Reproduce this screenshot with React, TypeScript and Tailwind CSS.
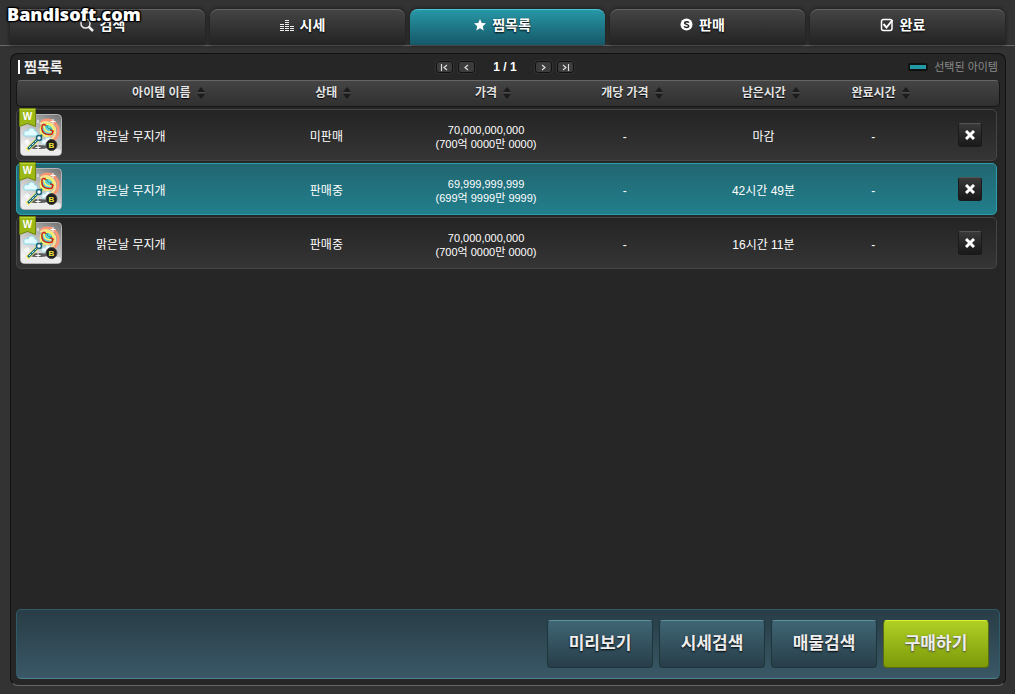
import React, { useState } from 'react';

const FONT = "font-['Liberation_Sans','Noto_Sans_CJK_KR',sans-serif]";
const COLS =
  'grid grid-cols-[minmax(0,230fr)_minmax(0,160fr)_minmax(0,160fr)_minmax(0,118fr)_minmax(0,160fr)_minmax(0,60fr)_minmax(0,93fr)] items-center';

const SearchIcon = () => (
  <svg width="14" height="14" viewBox="0 0 14 14" fill="none" stroke="#eee">
    <circle cx="5.5" cy="5.5" r="4.5" strokeWidth="1.5" />
    <path d="M8.5 8.5l4.5 4.5" strokeWidth="2.5" />
  </svg>
);

const ChartIcon = () => (
  <svg width="14" height="12" viewBox="0 0 14 12" fill="#eee" shapeRendering="crispEdges">
    <path d="M0 5h4v1H0zM0 7h4v1H0zM0 9h4v1H0zM0 11h4v1H0zM5 1h4v1H5zM5 3h4v1H5zM5 5h4v1H5zM5 7h4v1H5zM5 9h4v1H5zM5 11h4v1H5zM10 7h4v1h-4zM10 9h4v1h-4zM10 11h4v1h-4z" />
  </svg>
);

const StarIcon = () => (
  <svg width="12" height="12" viewBox="0 0 12 12" fill="#fff">
    <path d="M6 0l1.7 3.9 4.3.4-3.2 2.9.9 4.3L6 9.3l-3.7 2.2.9-4.3L0 4.3l4.3-.4z" />
  </svg>
);

const CoinIcon = () => (
  <svg width="13" height="13" viewBox="0 0 13 13">
    <circle cx="6.5" cy="6.5" r="6" fill="#fff" />
    <path d="M8.8 4.6C8.2 3.3 4.6 3.2 4.6 5c0 1.7 4.1 1 4.1 3 0 1.9-3.8 1.8-4.5.2" fill="none" stroke="#222" strokeWidth="1.5" />
  </svg>
);

const CheckIcon = () => (
  <svg width="14" height="14" viewBox="0 0 14 14" fill="none" stroke="#fff">
    <rect x="1.5" y="1.5" width="10.5" height="11" rx="2" strokeWidth="1.5" />
    <path d="M3.5 6l3 3.5L12.5 2" strokeWidth="2" />
  </svg>
);

const SortIcon = () => (
  <svg width="10" height="12" viewBox="0 0 10 12">
    <path d="M5 0l4 5H1z" fill="#1c1c1c" />
    <path d="M1 5.5h8" stroke="#4c4c4c" />
    <path d="M1 7h8l-4 5z" fill="#1c1c1c" />
  </svg>
);

const ItemIcon = () => (
  <svg width="42" height="42" viewBox="0 0 42 42" className="block">
    <defs>
      <linearGradient id="tile" x1="1" y1="0" x2="0.4" y2="1">
        <stop offset="0" stopColor="#6f6f6f" />
        <stop offset="0.45" stopColor="#b4b4b4" />
        <stop offset="1" stopColor="#f2f2f2" />
      </linearGradient>
    </defs>
    <rect x="0.5" y="0.5" width="41" height="41" rx="4" fill="url(#tile)" stroke="#b5b5b5" />
    <ellipse cx="18" cy="33" rx="10" ry="2" fill="#333" opacity="0.75" />
    <rect x="1" y="35" width="40" height="6" rx="3" fill="#ececec" />
    {/* rainbow ring */}
    <path d="M21 8c9-6 19 2 17 12-1 3-3 6-6 7" fill="none" stroke="#ff9473" strokeWidth="2.5" />
    <path d="M20 10c8-5 17 1 15 10-1 3-3 5-5 6" fill="none" stroke="#ffe08f" strokeWidth="2" />
    {/* clouds */}
    <path d="M4 21c-1-4 2-5 4-4 1-4 6-4 7 0 3 0 3 5 1 5H6c-1 0-2 0-2-1z" fill="#e4fbff" stroke="#86dbe9" />
    <path d="M22 30c-1-4 1-5 3-4 1-4 6-3 6 0 2 0 2 4 1 4z" fill="#f4fdff" stroke="#a3e2ee" />
    {/* candy head */}
    <ellipse cx="27" cy="16" rx="7.5" ry="7" fill="#f8f06a" />
    <ellipse cx="27" cy="16" rx="5.5" ry="5" fill="#5fd0d8" />
    <path d="M22 12c-1 6 3 10 10 8l1-3" fill="none" stroke="#d02414" strokeWidth="1.5" />
    <path d="M22 12c1-2 3-2 4 0M30 16c2 0 3 0 3 2" fill="none" stroke="#d02414" strokeWidth="1.5" />
    <path d="M24 12c0 4 2 6 7 6" fill="none" stroke="#fff36b" strokeWidth="1.5" />
    <path d="M27 11c0 3 1 4 5 4" fill="none" stroke="#1c8f86" />
    {/* wand */}
    <path d="M7 36L22 21" stroke="#fff264" strokeWidth="4" />
    <path d="M8 35L22 21" stroke="#12617c" strokeWidth="2.5" />
    <path d="M9 34L20 23" stroke="#c8f8ff" strokeDasharray="3 1" />
    <circle cx="19" cy="24" r="2.5" fill="#fff" stroke="#17657d" strokeWidth="1.5" />
    {/* sparkles */}
    <path d="M33 5v5M30.5 7.500h5M18 31v5M15.5 33.500h5M7 25v6M4 28h6M5 26l4 4M9 26l-4 4M18 6v3" stroke="#fff" />
    <circle cx="31.5" cy="31" r="5.5" fill="#1e1e1e" stroke="#4a4a4a" />
    <text x="31.5" y="34" textAnchor="middle" fill="#f0e43c" className="text-[8px] font-bold">
      B
    </text>
  </svg>
);

const Badge = () => (
  <svg width="17" height="19" viewBox="0 0 17 19" className="absolute -left-px -top-1.5">
    <path d="M0.5 0.500h16v18l-8-3-8 3z" fill="#9bb814" stroke="#6f850b" />
    <path d="M1 1.500h15" stroke="#bad52f" />
    <text x="8.5" y="12" textAnchor="middle" fill="#fff" className="text-[10px] font-bold">
      W
    </text>
  </svg>
);

const tabs = [
  { label: '검색', icon: <SearchIcon /> },
  { label: '시세', icon: <ChartIcon /> },
  { label: '찜목록', icon: <StarIcon /> },
  { label: '판매', icon: <CoinIcon /> },
  { label: '완료', icon: <CheckIcon /> },
];

const headers = ['아이템 이름', '상태', '가격', '개당 가격', '남은시간', '완료시간'];

const items = [
  { name: '맑은날 무지개', status: '미판매', price: '70,000,000,000', read: '(700억 0000만 0000)', left: '마감' },
  { name: '맑은날 무지개', status: '판매중', price: '69,999,999,999', read: '(699억 9999만 9999)', left: '42시간 49분' },
  { name: '맑은날 무지개', status: '판매중', price: '70,000,000,000', read: '(700억 0000만 0000)', left: '16시간 11분' },
];

const PageButton: React.FC<{ label: string; d: string }> = ({ label, d }) => (
  <button
    aria-label={label}
    className="flex h-3 w-[17px] items-center justify-center rounded-[3px] border border-[#111] bg-[#3c3c3c] shadow-[0_0_0_1px_#303030]"
  >
    <svg width="9" height="7" viewBox="0 0 9 7" fill="none" stroke="#ddd" strokeWidth="1.2">
      <path d={d} />
    </svg>
  </button>
);

const actions = ['미리보기', '시세검색', '매물검색'];

const App: React.FC = () => {
  const [tab, setTab] = useState<number>(2);
  const [selected, setSelected] = useState<number>(1);

  return (
    <div className={`${FONT} relative flex min-h-screen flex-col bg-[#333] text-xs text-[#eee]`}>
      <div className="pointer-events-none absolute left-[7px] top-1 z-10 font-['Open_Sans',sans-serif] text-lg font-extrabold leading-5 text-white [text-shadow:-1px_-1px_1px_#000,1px_-1px_1px_#000,-1px_1px_1px_#000,1px_1px_1px_#000,0_0_3px_#000]">
        Bandisoft.com
      </div>

      <nav className="flex gap-[5px] border-b border-[#6a6a6a] px-2.5 pt-[9px]">
        {tabs.map((t, i) => (
          <button
            key={t.label}
            onClick={() => setTab(i)}
            className={`flex h-9 flex-1 items-center justify-center gap-1.5 rounded-t-lg border-t pb-1.5 pr-2.5 text-sm font-bold text-white shadow-[0_0_4px_#151515] [text-shadow:0_1px_2px_#000] ${
              i === tab
                ? 'border-[#45c6d6] bg-linear-to-b from-[#2797a5] to-[#155869]'
                : 'border-[#666] bg-linear-to-b from-[#444] to-[#232323]'
            }`}
          >
            {t.icon}
            {t.label}
          </button>
        ))}
      </nav>

      <main className="mb-2 ml-2.5 mr-[9px] mt-[7px] flex flex-1 flex-col rounded-lg border border-[#101010] border-b-[#666] bg-[#262626] px-[5px] pb-1.5">
        <div className="grid h-[26px] grid-cols-[1fr_auto_1fr] items-center px-0.5">
          <h1 className="flex items-center gap-1 text-sm font-bold leading-5">
            <span className="h-3.5 w-0.5 bg-white" />
            찜목록
          </h1>
          <div className="flex items-center gap-[5px] pr-1.5">
            <PageButton label="처음" d="M1.5 0v7M7 1L4 3.500 7 6" />
            <PageButton label="이전" d="M6 1L3 3.500 6 6" />
            <span className="w-[50px] text-center font-bold text-white">1 / 1</span>
            <PageButton label="다음" d="M3 1l3 2.500L3 6" />
            <PageButton label="마지막" d="M2 1l3 2.500L2 6M7.5 0v7" />
          </div>
          <div className="flex items-center justify-end gap-1.5 text-[11px] text-[#8a8a8a]">
            <span className="h-2 w-5 rounded-[2px] border-2 border-[#111] bg-[#229aa6]" />
            선택된 아이템
          </div>
        </div>

        <table className="block">
          <thead className="block">
            <tr className={`${COLS} h-[27px] rounded-[5px] border border-[#151515] border-t-[#666] bg-linear-to-b from-[#444] to-[#303030] pr-0.5`}>
              {headers.map((h, i) => (
                <th key={h} className={`flex justify-center pb-0.5 ${i === 0 ? 'pl-[74px]' : 'pl-3.5'}`}>
                  <button className="flex items-center gap-[5px] whitespace-nowrap font-bold leading-4 text-[#e4e4e4] [text-shadow:0_1px_1px_#000]">
                    {h}
                    <SortIcon />
                  </button>
                </th>
              ))}
              <th aria-label="삭제" />
            </tr>
          </thead>
          <tbody className="mt-0.5 flex flex-col gap-0.5 pr-[3px]">
            {items.map((item, i) => (
              <tr
                key={i}
                onClick={() => setSelected(i)}
                className={`${COLS} h-[52px] rounded-[5px] border text-center text-white ${
                  i === selected
                    ? 'border-[#2ba0ad] bg-linear-to-b from-[#216671] to-[#217f8c]'
                    : 'border-[#454545] bg-linear-to-b from-[#242424] to-[#353535]'
                }`}
              >
                <td className="flex items-center gap-[34px] pl-[3px]">
                  <div className="relative">
                    <ItemIcon />
                    <Badge />
                  </div>
                  <span className="pt-1">{item.name}</span>
                </td>
                <td className="pt-1">{item.status}</td>
                <td className="pt-1 text-[11px] leading-[14px]">
                  {item.price}
                  <br />
                  {item.read}
                </td>
                <td className="pt-1">-</td>
                <td className="pt-1">{item.left}</td>
                <td className="pt-1">-</td>
                <td className="flex justify-end pr-3.5">
                  <button
                    aria-label="삭제"
                    className="flex size-6 items-center justify-center rounded-[3px] border border-[#1a1a1a] border-t-[#555] bg-linear-to-b from-[#3a3a3a] to-[#191919]"
                  >
                    <svg width="10" height="10" viewBox="0 0 10 10" stroke="#fff" strokeWidth="3">
                      <path d="M1 1l8 8M9 1L1 9" />
                    </svg>
                  </button>
                </td>
              </tr>
            ))}
          </tbody>
        </table>

        <footer className="mt-auto flex justify-end gap-1.5 rounded-[5px] border border-[#315b68] border-b-[#4f8290] bg-linear-to-b from-[#283d46] to-[#3a5867] px-2.5 py-[10px]">
          {actions.map((a) => (
            <button
              key={a}
              className="h-12 w-[106px] rounded-[4px] border border-[#20343c] border-t-[#5b93a2] bg-linear-to-b from-[#3f6674] to-[#283e4a] text-[17px] font-bold text-[#eee] [text-shadow:0_1px_2px_#000]"
            >
              {a}
            </button>
          ))}
          <button className="h-12 w-[106px] rounded-[4px] border border-[#5a6c10] border-t-[#d8ef30] bg-linear-to-b from-[#b0d024] to-[#7c9a08] text-[17px] font-bold text-[#eee] [text-shadow:0_1px_2px_#444]">
            구매하기
          </button>
        </footer>
      </main>
    </div>
  );
};

export default App;
